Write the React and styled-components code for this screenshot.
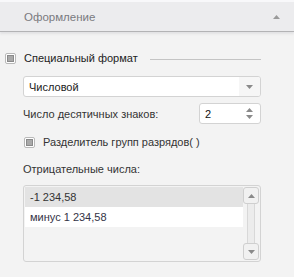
import React from "react";
import styled, { createGlobalStyle } from "styled-components";

const Global = createGlobalStyle`
  html, body { margin: 0; padding: 0; background: #f3f3f3; }
  body { font-family: "Liberation Sans", Arial, sans-serif; font-size: 11px; color: #333; }
`;

const Panel = styled.div`
  width: 294px;
  height: 277px;
  background: #f3f3f3;
  box-sizing: border-box;
  border-top: 2px solid #f8f8fa;
`;

const Header = styled.div`
  height: 29px;
  background: #ececee;
  border-bottom: 1px solid #b3b3b5;
  box-shadow: 0 2px 2px #e2e2e4;
  display: flex;
  align-items: center;
  justify-content: space-between;
  padding: 0 14px 0 24px;
  color: #7a7a7e;
  font-size: 11.5px;
`;

const Body = styled.div`
  padding: 16px 33px 0 5px;
  display: flex;
  flex-direction: column;
`;

const Row = styled.div`
  display: flex;
  align-items: center;
  height: ${p => p.$h || 20}px;
  margin-left: ${p => p.$indent || 0}px;
  margin-top: ${p => p.$mt || 0}px;
  justify-content: ${p => p.$between ? "space-between" : "flex-start"};
`;

const Check = styled.span`
  width: 11px;
  height: 11px;
  box-sizing: border-box;
  border: 1px solid #b9b9b9;
  border-radius: 2px;
  background: #fff;
  display: inline-flex;
  align-items: center;
  justify-content: center;
  margin-right: 8px;
  &::after {
    content: "";
    width: 7px;
    height: 7px;
    box-sizing: border-box;
    background: #a9a9a9;
    border: 1px solid #8a8a8a;
  }
`;

const Line = styled.span`
  flex: 1;
  height: 1px;
  background: #c4c4c4;
  margin-left: 12px;
  margin-top: 3px;
`;

const Select = styled.div`
  height: 21px;
  box-sizing: border-box;
  border: 1px solid #d3d3d3;
  border-radius: 3px;
  background: #fff;
  display: flex;
  align-items: stretch;
  overflow: hidden;
`;

const SelectText = styled.div`
  flex: 1;
  padding-left: 5px;
  display: flex;
  align-items: center;
  color: #222;
`;

const SelectBtn = styled.div`
  width: 21px;
  background: #f6f6f6;
  display: flex;
  align-items: center;
  justify-content: center;
`;

const Spin = styled.div`
  width: 62px;
  height: 21px;
  box-sizing: border-box;
  border: 1px solid #d3d3d3;
  border-radius: 3px;
  background: #fff;
  display: flex;
  align-items: center;
  justify-content: space-between;
  padding: 0 7px 0 5px;
  color: #111;
`;

const Arrows = styled.div`
  display: flex;
  flex-direction: column;
  gap: 3px;
`;

const Label = styled.span`
  color: ${p => p.$color || "#333"};
`;

const List = styled.div`
  margin-left: 18px;
  margin-top: 6px;
  height: 77px;
  box-sizing: border-box;
  border: 1px solid #d3d3d3;
  border-radius: 3px;
  background: #f3f3f3;
  display: flex;
  padding: 1px;
`;

const Items = styled.div`
  flex: 1;
  display: flex;
  flex-direction: column;
`;

const Item = styled.div`
  height: 20px;
  display: flex;
  align-items: center;
  padding-left: 5px;
  background: ${p => p.$selected ? "#e3e3e3" : "#fff"};
  color: ${p => p.$selected ? "#333" : "#333346"};
`;

const Scroll = styled.div`
  width: 16px;
  display: flex;
  flex-direction: column;
  align-items: center;
`;

const ScrollBtn = styled.div`
  width: 16px;
  height: 17px;
  box-sizing: border-box;
  border: 1px solid #cfcfcf;
  border-radius: 3px;
  background: #f1f1f1;
  display: flex;
  align-items: center;
  justify-content: center;
`;

const Track = styled.div`
  flex: 1;
  width: 8px;
  box-sizing: border-box;
  border-left: 1px solid #d8d8d8;
  border-right: 1px solid #d8d8d8;
  background: #ececec;
`;

const Tri = ({ up, color = "#8a8a8a" }) => (
  <svg width="7" height="4" viewBox="0 0 7 4">
    <path d={up ? "M0 4 L3.5 0 L7 4 Z" : "M0 0 L7 0 L3.5 4 Z"} fill={color} />
  </svg>
);

export default function App() {
  return (
    <>
      <Global />
      <Panel>
        <Header>
          <span>Оформление</span>
          <Tri up color="#9a9a9a" />
        </Header>
        <Body>
          <Row $h={20}>
            <Check />
            <Label $color="#222">Специальный формат</Label>
            <Line />
          </Row>
          <Row $h={21} $indent={18} $mt={8} style={{ display: "block" }}>
            <Select>
              <SelectText>Числовой</SelectText>
              <SelectBtn><Tri /></SelectBtn>
            </Select>
          </Row>
          <Row $h={21} $indent={18} $mt={6} $between>
            <Label>Число десятичных знаков:</Label>
            <Spin>
              <span>2</span>
              <Arrows>
                <Tri up />
                <Tri />
              </Arrows>
            </Spin>
          </Row>
          <Row $h={20} $indent={19} $mt={8}>
            <Check />
            <Label>Разделитель групп разрядов( )</Label>
          </Row>
          <Row $h={20} $indent={18} $mt={7}>
            <Label>Отрицательные числа:</Label>
          </Row>
          <List>
            <Items>
              <Item $selected>-1 234,58</Item>
              <Item>минус 1 234,58</Item>
            </Items>
            <Scroll>
              <ScrollBtn><Tri up /></ScrollBtn>
              <Track />
              <ScrollBtn><Tri /></ScrollBtn>
            </Scroll>
          </List>
        </Body>
      </Panel>
    </>
  );
}
